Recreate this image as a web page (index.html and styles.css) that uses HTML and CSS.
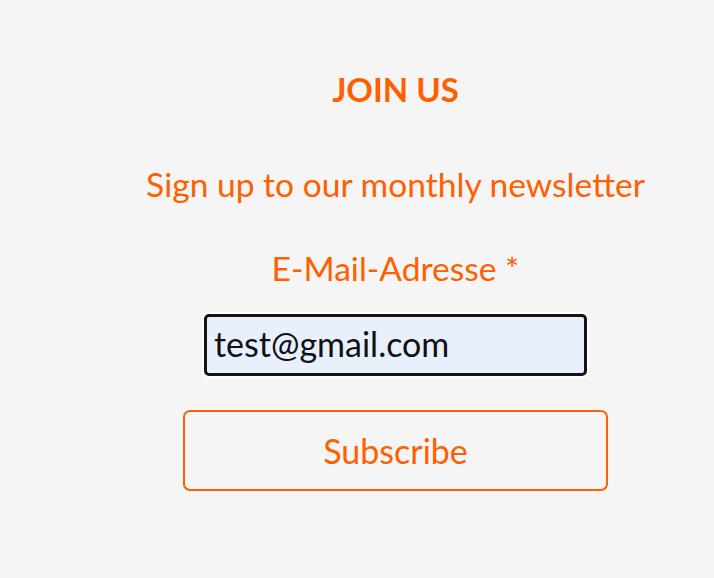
FILE: index.html
```html
<!DOCTYPE html>
<html>
<head>
<meta charset="utf-8">
<link rel="stylesheet" href="styles.css">
</head>
<body>
<section class="newsletter">
  <h2 class="title">JOIN US</h2>
  <p class="lead">Sign up to our monthly newsletter</p>
  <form class="form">
    <label class="label" for="email">E-Mail-Adresse *</label>
    <input class="input" id="email" type="email" value="test@gmail.com">
    <button class="button" type="button">Subscribe</button>
  </form>
</section>
</body>
</html>
```
FILE: styles.css
```css
html, body {
  margin: 0;
  padding: 0;
  background: #f5f5f5;
}
body {
  font-family: Lato, "Liberation Sans", sans-serif;
  color: #ff5f00;
}
.newsletter {
  padding: 69px 0 0 77px;
  display: flex;
  flex-direction: column;
  align-items: center;
}
.title {
  margin: 0;
  font-size: 33px;
  font-weight: 700;
  line-height: 40px;
}
.lead {
  margin: 55px 0 0;
  font-size: 33.6px;
  line-height: 40px;
}
.form {
  display: flex;
  flex-direction: column;
  align-items: center;
}
.label {
  margin-top: 44px;
  font-size: 33.6px;
  line-height: 40px;
}
.input {
  margin-top: 26px;
  box-sizing: border-box;
  width: 383px;
  height: 62px;
  border: 3px solid #141414;
  border-radius: 5px;
  background: #e8f0fe;
  font-family: Lato, "Liberation Sans", sans-serif;
  font-size: 34px;
  color: #111;
  padding: 0 6px 3px 7px;
  box-shadow: 0 0 0 2px #fff;
  outline: none;
}
.button {
  margin-top: 34px;
  box-sizing: border-box;
  width: 425px;
  height: 81px;
  border: 2px solid #ff5f00;
  border-radius: 7px;
  background: transparent;
  font-family: Lato, "Liberation Sans", sans-serif;
  font-size: 34px;
  color: #ff5f00;
}
```
